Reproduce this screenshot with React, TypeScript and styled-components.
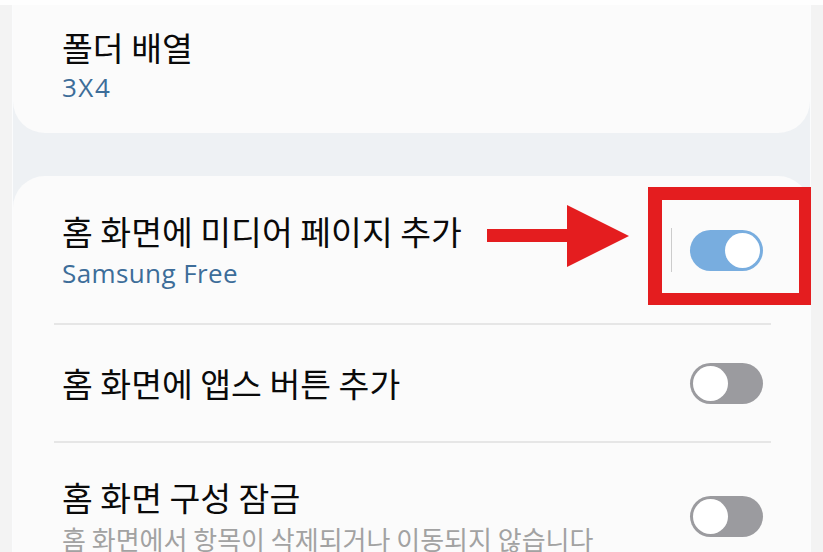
import React from "react";
import styled, { createGlobalStyle } from "styled-components";

const Global = createGlobalStyle`
  html, body { margin: 0; padding: 0; background: #f3f3f3; }
  body { font-family: "Noto Sans CJK KR", "Noto Sans", sans-serif; overflow: hidden; }
`;

const Screen = styled.div`
  position: relative;
  width: 823px;
  height: 552px;
  overflow: hidden;
  background: #f3f3f3;
`;

const TopStrip = styled.div`
  height: 5px;
  background: #fefefe;
`;

const Content = styled.div`
  margin: 0 12px 0 12px;
  border-left: 1px solid #fbfcfd;
  border-right: 1px solid #fbfcfd;
  background: #eef1f4;
  display: flex;
  flex-direction: column;
  gap: 43px;
  min-height: 600px;
`;

const Card = styled.section<{ $pos: "bottom" | "top" }>`
  background: #fbfbfb;
  border-radius: ${(p) => (p.$pos === "bottom" ? "0 0 32px 32px" : "32px 32px 0 0")};
  padding: ${(p) => (p.$pos === "bottom" ? "22px 47px 30px 49px" : "1px 0 0 0")};
`;

const Row = styled.div<{ $first?: boolean; $min?: number }>`
  display: flex;
  align-items: center;
  gap: 18px;
  margin: 0 39px 0 41px;
  padding: 34px 8px 34px 8px;
  box-sizing: border-box;
  min-height: ${(p) => (p.$min ? `${p.$min}px` : "auto")};
  border-top: ${(p) => (p.$first ? "none" : "2px solid #e6e6e6")};
`;

const TextBlock = styled.div`
  flex: 1;
  display: flex;
  flex-direction: column;
  gap: 6px;
  min-width: 0;
`;

const Title = styled.div`
  font-family: "Noto Sans CJK KR", "Noto Sans", sans-serif;
  font-size: 33.5px;
  line-height: 40px;
  color: #0a0a0a;
  white-space: nowrap;
`;

const Value = styled.div<{ $wide?: boolean }>`
  font-family: "Open Sans", "Noto Sans CJK KR", sans-serif;
  font-size: 26px;
  line-height: 32px;
  letter-spacing: ${(p) => (p.$wide ? "1.5px" : "0.4px")};
  margin-top: ${(p) => (p.$wide ? "-2px" : "0")};
  color: #3d6d99;
  white-space: nowrap;
`;

const Description = styled.div`
  font-family: "Noto Sans CJK KR", "Noto Sans", sans-serif;
  font-size: 26px;
  line-height: 32px;
  color: #a2a2a2;
  white-space: nowrap;
`;

const VLine = styled.div`
  width: 1px;
  height: 44px;
  background: #cccccc;
`;

const Track = styled.div<{ $on: boolean }>`
  position: relative;
  width: 73px;
  height: 41px;
  border-radius: 21px;
  flex-shrink: 0;
  background: ${(p) => (p.$on ? "#78addf" : "#9b9b9f")};
`;

const Thumb = styled.div<{ $on: boolean }>`
  position: absolute;
  top: 3px;
  left: ${(p) => (p.$on ? "35px" : "3px")};
  width: 35px;
  height: 35px;
  border-radius: 50%;
  background: #ffffff;
`;

const Highlight = styled.div`
  position: absolute;
  left: 648px;
  top: 187px;
  width: 163px;
  height: 118px;
  box-sizing: border-box;
  border: 13px solid #e41d1f;
  border-left-width: 14px;
  border-right-width: 12px;
  border-bottom-width: 12px;
  pointer-events: none;
`;

const ArrowSvg = styled.svg`
  position: absolute;
  left: 487px;
  top: 205px;
`;

function Toggle({ on }: { on: boolean }) {
  return (
    <Track $on={on}>
      <Thumb $on={on} />
    </Track>
  );
}

export default function App() {
  return (
    <Screen>
      <Global />
      <TopStrip />
      <Content>
        <Card $pos="bottom">
          <TextBlock>
            <Title>폴더 배열</Title>
            <Value $wide>3X4</Value>
          </TextBlock>
        </Card>
        <Card $pos="top">
          <Row $first>
            <TextBlock>
              <Title>홈 화면에 미디어 페이지 추가</Title>
              <Value>Samsung Free</Value>
            </TextBlock>
            <VLine />
            <Toggle on />
          </Row>
          <Row $min={118}>
            <TextBlock>
              <Title>홈 화면에 앱스 버튼 추가</Title>
            </TextBlock>
            <Toggle on={false} />
          </Row>
          <Row>
            <TextBlock>
              <Title>홈 화면 구성 잠금</Title>
              <Description>홈 화면에서 항목이 삭제되거나 이동되지 않습니다</Description>
            </TextBlock>
            <Toggle on={false} />
          </Row>
        </Card>
      </Content>
      <ArrowSvg width="142" height="62" viewBox="0 0 142 62">
        <rect x="0" y="24" width="82" height="13" fill="#e41d1f" />
        <polygon points="80,0 142,31 80,62" fill="#e41d1f" />
      </ArrowSvg>
      <Highlight />
    </Screen>
  );
}
